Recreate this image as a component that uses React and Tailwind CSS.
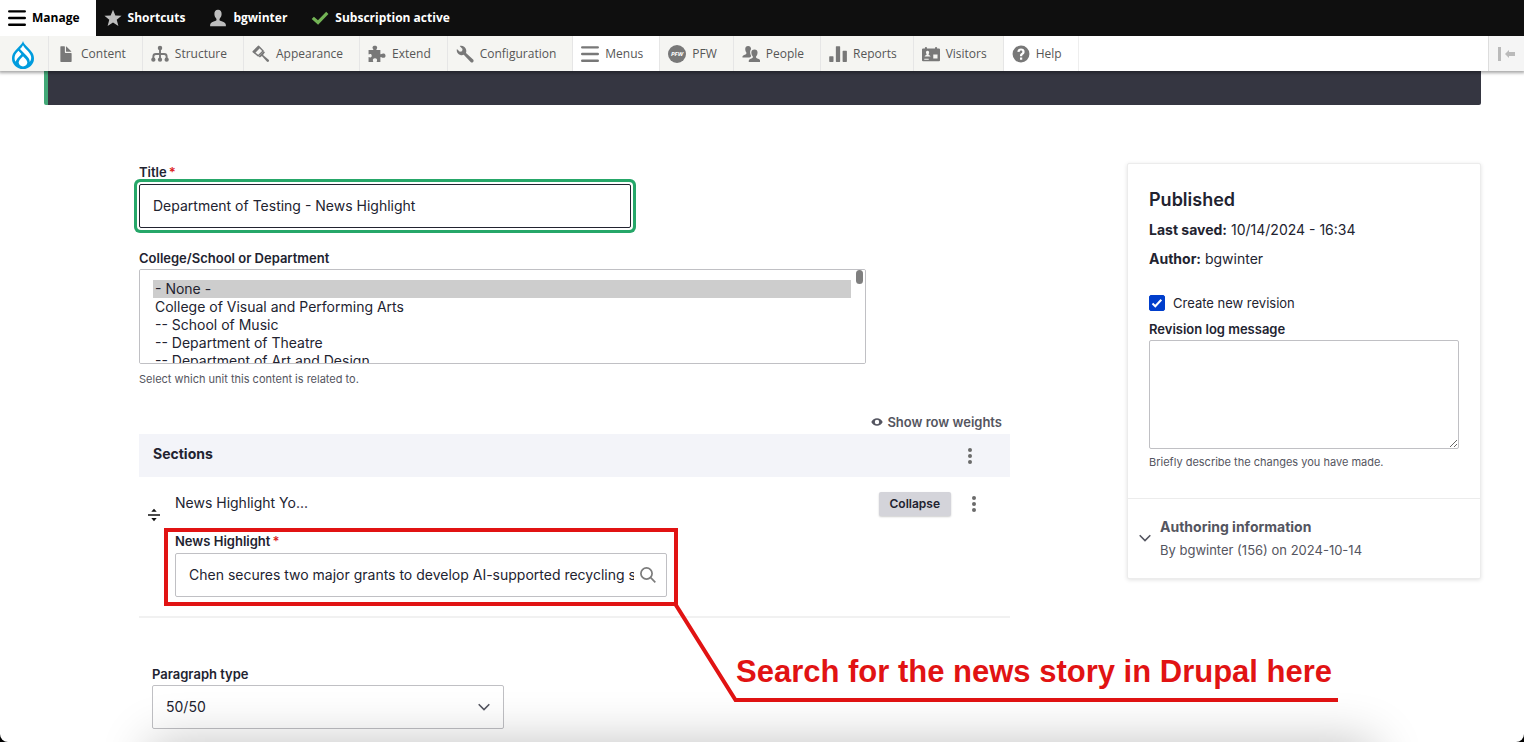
import React from "react";

const ICONS = {
  content: (
    <path d="M12.5 7h-5c-.28 0-.5-.23-.5-.5v-5c0-.28-.23-.5-.5-.5h-3c-.28 0-.5.23-.5.5v13c0 .28.22.5.5.5h9c.28 0 .5-.22.5-.5v-7c0-.28-.22-.5-.5-.5zM8.5 6h4c.28 0 .34-.16.15-.35L8.35 1.35C8.16 1.16 8 1.23 8 1.5v4c0 .28.22.5.5.5z" />
  ),
  structure: (
    <g>
      <circle cx="8" cy="2.6" r="2" />
      <circle cx="2.1" cy="13" r="1.9" />
      <circle cx="8" cy="13" r="1.9" />
      <circle cx="13.9" cy="13" r="1.9" />
      <path d="M8 3v10M2.1 12.500v-2.300q0-2.200 2.200-2.200h7.400q2.200 0 2.200 2.200v2.300" fill="none" stroke="currentColor" strokeWidth="1.7" />
    </g>
  ),
  appearance: (
    <g>
      <path d="M5.800 1.200 1 6l4.600 3.600 4.300-4.300z" fill="none" stroke="currentColor" strokeWidth="1.3" strokeLinejoin="round" />
      <path d="M1 6 5.800 1.200l1.500 1.300-4.700 4.800zM6 10.200l4.500-4.600 1 .9-1.700 2.300 5 4.300q.8.800 0 1.600t-1.600 0L8.800 9.800 7 11z" />
    </g>
  ),
  extend: (
    <path d="M1 4.500h3.300c.6 0 .5-.5.200-.9C3.600 2.300 3.900.6 6.100.6s2.500 1.700 1.600 3c-.3.400-.4.900.2.900H11v3.300c0 .6.500.5.900.2 1.300-.8 3.700-.6 3.700 1.500s-2.400 2.300-3.700 1.400c-.4-.3-.9-.3-.9.300V15H8.100c-.5 0-.5-.4-.2-.8.6-1.200 0-2.500-1.700-2.500s-2.300 1.300-1.700 2.500c.3.400.3.800-.2.800H.5v-3.900c0-.5.400-.5.800-.3 1.100.6 2-.1 2-1.300s-.9-1.800-2-1.200c-.4.200-.8.200-.8-.3V4.500z" />
  ),
  configuration: (
    <path d="M15.200 12.900 8.900 7c.7-1.900.1-3.900-1.400-5.200C6.300.8 4.700.5 3.300.9l2.500 2.600-.4 2-2 .5L.8 3.500C.4 5 .8 6.600 2 7.700c1.300 1.300 3.300 1.700 4.900 1l6.100 6.400c.6.600 1.600.6 2.200 0s.6-1.600 0-2.200z" />
  ),
  menu: (
    <path d="M1.100 1h13.800a1.100 1.100 0 0 1 0 2.200H1.100A1.100 1.100 0 0 1 1.100 1zM1.100 6.900h13.800a1.100 1.100 0 0 1 0 2.200H1.100a1.100 1.100 0 0 1 0-2.200zM1.100 12.800h13.800a1.100 1.100 0 0 1 0 2.200H1.100a1.100 1.100 0 0 1 0-2.200z" />
  ),
  people: (
    <g>
      <path d="M6.700 11.200c.2-.6 1.400-.8 1.500-1.500-.6-.9-1-2-1-3.200 0-1.300.3-2.300.9-3C7.900 1.800 7.100.8 5.500.8 3.500.8 2.800 2 2.900 3.900c.1 1.300.5 2.200 1 2.700.2.900-.2 1.500-.9 1.800C1.400 9 .5 9.400.4 10.500v.7z" />
      <path d="M13.200 11.800c-.8-.3-.9-1.100-.6-1.800.7-.7 1.100-1.700 1.200-3 .1-1.900-.8-3.100-2.700-3.100S8.200 5.100 8.300 7c.1 1.300.5 2.300 1.200 3 .3.700.2 1.500-.6 1.800-1.700.6-2.800 1-2.900 2.300v1h10.100v-1c-.1-1.300-1.200-1.700-2.900-2.300z" />
    </g>
  ),
  reports: (
    <path d="M.7 10h2.800q.5 0 .5.5v4q0 .5-.5.5H.7q-.5 0-.5-.5v-4q0-.5.500-.5zM6.600 1h2.800q.5 0 .5.500v13q0 .5-.5.500H6.600q-.5 0-.5-.5v-13q0-.5.5-.5zM12.600 5h2.800q.5 0 .5.500v9q0 .5-.5.500h-2.800q-.5 0-.5-.5v-9q0-.5.5-.5z" />
  ),
  visitors: (
    <path
      fillRule="evenodd"
      d="M1 3h1.600V2.200c0-.7 1.800-.7 1.800 0V3h7.200v-.8c0-.7 1.800-.7 1.800 0V3H15q1 0 1 1v9.500q0 1-1 1H1q-1 0-1-1V4q0-1 1-1zm3.900 2C3.700 5 3.400 6 3.600 7c.1.600.4.900.6 1.200 0 .8-1.700.6-1.900 2.100h5.300C7.400 8.800 5.700 9 5.700 8.200c.2-.3.500-.6.600-1.200.2-1-.2-2-1.400-2zM10 8.500V12h3.800V8.500zM2 12.300v.8h4v-.8z"
    />
  ),
  help: (
    <path
      fillRule="evenodd"
      d="M8 .5a7.500 7.500 0 1 0 0 15A7.500 7.500 0 0 0 8 .5zM7.100 13v-2h2v2zm3.600-5.300c-.5.700-1.300.9-1.500 1.400-.1.200-.1.500-.1.900h-2c0-1 .1-1.600.6-2.200.5-.5 1.500-.9 1.500-1.800 0-.7-.5-1.100-1.200-1.100-.8 0-1.200.5-1.300 1.400l-2-.2C4.900 4.300 6.100 3.200 8 3.200c2 0 3.200 1.100 3.200 2.700 0 .7-.1 1.300-.5 1.800z"
    />
  ),
  star: <path d="M8 .6l2.100 5.200 5.500.3-4.300 3.500 1.500 5.500L8 12l-4.800 3.100 1.500-5.500L.4 6.100l5.500-.3z" />,
  user: (
    <path d="M10 10.500c-.9-.3-.8-1.400-.4-2.100.9-.9 1.500-2.100 1.600-3.700C11.400 2.300 10.200.6 8 .6S4.600 2.300 4.800 4.700c.1 1.600.7 2.800 1.600 3.700.4.700.5 1.800-.4 2.100C3.400 11.300 1.300 12 1 14v1.400h14V14c-.3-2-2.400-2.700-5-3.500z" />
  ),
  check: <path d="M.6 8.900 2.600 6.900l3.600 3.200L13.500 2.400 15.500 4.400 6.300 14z" />,
};

function Icon({ name, className = "size-[18px]" }) {
  return (
    <svg viewBox="0 0 16 16" fill="currentColor" aria-hidden="true" className={"shrink-0 " + className}>
      {ICONS[name]}
    </svg>
  );
}

function PfwBadge() {
  return (
    <svg viewBox="0 0 18 18" aria-hidden="true" className="size-[18px] shrink-0">
      <circle cx="9" cy="9" r="9" fill="currentColor" />
      <text x="9" y="11.300" textAnchor="middle" fontSize="6" fontWeight="700" fontStyle="italic" fill="#fff">
        PFW
      </text>
    </svg>
  );
}

function DrupalLogo() {
  return (
    <svg viewBox="0 0 22 28" aria-hidden="true" className="h-7 w-[22px]">
      <path
        d="M11 0c-.6 2.300-2.600 4.300-4.600 6.300C3.300 9.400 0 12.700 0 17.400a11 10.600 0 0 0 22 0c0-4.700-3.300-8-6.400-11.100C13.600 4.300 11.600 2.300 11 0z"
        fill="#009cde"
      />
      <path d="M11 4.200C10 5.900 9 7 8 8l6.600 6.700c2.400 2.400 3.300 3.900 3 6.300 1.500-1.700 1.900-3.600 1.400-5.700-.6-2.700-2.600-4.800-4.700-6.900C13 7.100 11.800 5.700 11 4.200z" fill="#fff" />
      <path d="M6.400 9.700C3.800 12.200 2.200 14.700 2.600 18c.1 1.200.5 2.100 1 2.800.5-1.900 2-3.700 5.300-7.100l.5-.6z" fill="#fff" />
      <path d="M11 15.200c-2.900 2.900-4.300 4.500-4.300 6.300 0 2.300 2 3.900 4.300 3.900s4.300-1.600 4.300-3.900c0-1.800-1.400-3.400-4.300-6.300z" fill="#fff" />
    </svg>
  );
}

const TOOLBAR = [
  { label: "Content", icon: "content" },
  { label: "Structure", icon: "structure" },
  { label: "Appearance", icon: "appearance" },
  { label: "Extend", icon: "extend" },
  { label: "Configuration", icon: "configuration" },
  { label: "Menus", icon: "menu", light: true },
  { label: "PFW" },
  { label: "People", icon: "people" },
  { label: "Reports", icon: "reports" },
  { label: "Visitors", icon: "visitors" },
  { label: "Help", icon: "help", light: true },
];

const UNITS = [
  "- None -",
  "College of Visual and Performing Arts",
  "-- School of Music",
  "-- Department of Theatre",
  "-- Department of Art and Design",
  "College of Engineering, Technology, and Computer Science",
  "-- School of Polytechnic",
  "-- Department of Computer Science",
  "College of Liberal Arts",
  "-- School of Education",
  "-- Department of Communication",
  "-- Department of History",
  "College of Science",
  "-- Department of Biology",
  "-- Department of Chemistry",
  "-- Department of Physics",
  "-- Department of Psychology",
];

function Header() {
  return (
    <header className="relative z-10 font-['Open_Sans',sans-serif] text-xs shadow-[0_1px_3px_1px_rgba(0,0,0,0.35)]">
      <nav aria-label="Administration" className="flex h-9 items-stretch bg-[#0f0f0f] font-bold text-white">
        <a href="#manage" className="flex items-center gap-1.5 bg-white pr-4 pl-2 text-black">
          <Icon name="menu" />
          Manage
        </a>
        <a href="#shortcuts" className="flex items-center gap-1.5 pl-2">
          <Icon name="star" className="size-[18px] text-[#bebebe]" />
          Shortcuts
        </a>
        <a href="#user" className="flex items-center gap-1.5 pl-6">
          <Icon name="user" className="size-[18px] text-[#bebebe]" />
          bgwinter
        </a>
        <a href="#subscription" className="flex items-center gap-1.5 pl-6">
          <Icon name="check" className="size-[18px] text-[#73b355]" />
          Subscription active
        </a>
      </nav>
      <nav aria-label="Site" className="flex h-[35px] items-stretch bg-white text-[#565656]">
        <a href="#home" aria-label="Home" className="flex w-12 items-center bg-[#f5f5f2] pt-0.5 pl-3">
          <DrupalLogo />
        </a>
        {TOOLBAR.map((item) => (
          <a
            key={item.label}
            href={"#" + item.label.toLowerCase()}
            className={
              "flex items-center gap-1.5 border-l border-[#e6e6e6] pr-4 pl-2 " +
              (item.light ? "bg-white" : "bg-[#f5f5f2]")
            }
          >
            <span className="flex text-[#787878]">{item.icon ? <Icon name={item.icon} /> : <PfwBadge />}</span>
            {item.label}
          </a>
        ))}
        <div className="flex-1 border-l border-[#eeeeee]" />
        <button
          type="button"
          aria-label="Vertical orientation"
          className="flex w-9 items-center justify-center border-l border-[#dddddd] bg-[#f5f5f5] text-[#bababa]"
        >
          <svg viewBox="0 0 18 14" fill="currentColor" className="h-3.5 w-[18px]">
            <path d="M0 0h3v14H0zM7 7l4-4v2h6v4h-6v2z" />
          </svg>
        </button>
      </nav>
    </header>
  );
}

function Required() {
  return <span className="ml-0.5 text-[#dc2323]">*</span>;
}

function Kebab() {
  return (
    <svg viewBox="0 0 4 16" fill="#6b6b6b" aria-hidden="true" className="h-4 w-1">
      <circle cx="2" cy="2" r="2" />
      <circle cx="2" cy="8" r="2" />
      <circle cx="2" cy="14" r="2" />
    </svg>
  );
}

function Chevron({ className }) {
  return (
    <svg viewBox="0 0 12 8" fill="none" stroke="#545560" strokeWidth="1.6" aria-hidden="true" className={className}>
      <path d="M.7 1.200 6 6.500l5.300-5.300" />
    </svg>
  );
}

function Sections() {
  return (
    <section className="mt-6">
      <div className="flex justify-end pr-2">
        <button type="button" className="flex items-center gap-1 text-[13px] leading-5 font-semibold text-[#545560]">
          <svg viewBox="0 0 12 8" aria-hidden="true" className="h-2 w-3">
            <path fill="#545560" fillRule="evenodd" d="M6 .3C3.500.3 1.300 1.800.3 4c1 2.200 3.200 3.700 5.700 3.700S10.700 6.200 11.700 4C10.700 1.800 8.500.3 6 .3zM6 6.200a2.200 2.200 0 1 1 0-4.400 2.200 2.200 0 0 1 0 4.400z" />
          </svg>
          Show row weights
        </button>
      </div>
      <div className="mt-0.5 flex h-[43px] items-center justify-between bg-[#f3f4f9] pr-[38px] pl-3.5">
        <h2 className="pb-1 text-sm font-bold">Sections</h2>
        <button type="button" aria-label="Section actions" className="flex">
          <Kebab />
        </button>
      </div>
      <div className="flex border-b-2 border-[#f1f1f1] pb-[19px]">
        <button type="button" aria-label="Drag to re-order" className="mt-[31px] ml-[9px] flex h-3.5 w-3 shrink-0">
          <svg viewBox="0 0 12 14" fill="#111" className="h-3.5 w-3">
            <path d="M0 6.200h12v1.500H0zM6 .7l2.700 3.100H3.300zM6 13.200l2.700-3.100H3.300z" />
          </svg>
        </button>
        <div className="ml-[15px] min-w-0 flex-1">
          <div className="mt-[15px] flex h-6 items-center">
            <span className="flex-1 pb-0.5 text-sm">News Highlight Yo...</span>
            <button
              type="button"
              className="mr-[21px] h-6 rounded-xs bg-[#d4d4da] px-[11px] text-xs font-semibold shadow-[0_1px_2px_rgba(0,0,0,0.2)]"
            >
              Collapse
            </button>
            <button type="button" aria-label="Item actions" className="mr-[34px] flex">
              <Kebab />
            </button>
          </div>
          <div className="relative mt-[15px] w-[492px]">
            <label htmlFor="highlight" className="block text-[13px] leading-5 font-semibold">
              News Highlight
              <Required />
            </label>
            <div className="mt-0.5 flex h-11 items-center rounded-xs border border-[#c0c0c4] bg-white pr-2.5 pl-[13px]">
              <input
                id="highlight"
                type="text"
                defaultValue="Chen secures two major grants to develop AI-supported recycling system"
                className="min-w-0 flex-1 bg-transparent text-sm outline-none"
              />
              <svg viewBox="0 0 16 16" fill="none" stroke="#7c7c7c" strokeWidth="1.700" aria-hidden="true" className="ml-1.5 size-4">
                <circle cx="6.500" cy="6.500" r="5.600" />
                <path d="m10.700 10.700 4.600 4.600" />
              </svg>
            </div>
            <Callout />
          </div>
        </div>
      </div>
    </section>
  );
}

function Callout() {
  return (
    <div className="pointer-events-none absolute -top-[3px] -right-[11px] -bottom-[9px] -left-[11px] border-4 border-[#e11313]">
      <svg viewBox="0 0 664 100" fill="none" className="absolute top-full left-full h-[100px] w-[664px]">
        <path d="M0 0 61.500 98H664" stroke="#e11313" strokeWidth="4" />
      </svg>
      <p className="absolute top-full left-full mt-[50px] ml-[62px] font-['Liberation_Sans',sans-serif] text-[31px] leading-10 font-bold whitespace-nowrap text-[#e11313]">
        Search for the news story in Drupal here
      </p>
    </div>
  );
}

function Sidebar() {
  return (
    <aside className="w-[354px] shrink-0 self-start rounded-xs border border-[#ececec] bg-white shadow-[0_1px_4px_rgba(0,0,0,0.12)]">
      <div className="px-[21px] pt-6 pb-[27px]">
        <h2 className="text-lg leading-6 font-semibold">Published</h2>
        <p className="mt-1.5 text-sm leading-6">
          <b>Last saved:</b> 10/14/2024 - 16:34
        </p>
        <p className="mt-[5px] text-sm leading-6">
          <b>Author:</b> bgwinter
        </p>
        <label className="mt-[22px] flex items-center gap-2 text-[13px] leading-5">
          <span className="relative flex size-4">
            <input
              type="checkbox"
              defaultChecked
              className="size-4 appearance-none rounded-xs border border-[#8e929c] checked:border-[#003ecc] checked:bg-[#003ecc]"
            />
            <svg viewBox="0 0 16 16" fill="none" stroke="#fff" strokeWidth="2" aria-hidden="true" className="pointer-events-none absolute inset-0">
              <path d="m3.500 8.500 2.800 2.700 6-6.500" />
            </svg>
          </span>
          Create new revision
        </label>
        <label htmlFor="log" className="mt-1.5 block text-[13px] leading-5 font-semibold">
          Revision log message
        </label>
        <textarea id="log" className="mt-px block h-[109px] w-full rounded-xs border border-[#c0c0c4] bg-white outline-none" />
        <p className="mt-1 text-[11px] leading-[18px] text-[#545560]">Briefly describe the changes you have made.</p>
      </div>
      <button type="button" className="flex w-full items-center gap-[9px] border-t border-[#ececec] px-[11px] pt-4 pb-[17px] text-left text-[#545560]">
        <Chevron className="h-2 w-3" />
        <span>
          <span className="block text-sm leading-6 font-bold">Authoring information</span>
          <span className="block text-[13px] leading-[22px]">By bgwinter (156) on 2024-10-14</span>
        </span>
      </button>
    </aside>
  );
}

export default function App() {
  return (
    <div className="h-screen bg-black">
      <div className="relative h-full overflow-hidden rounded-b-lg bg-white font-['Inter',sans-serif] text-[#222330]">
        <Header />
        <div className="pr-[43px] pl-11">
          <div role="status" className="h-[34px] rounded-b-xs border-l-4 border-[#42a877] bg-[#353641]" />
          <div className="flex pt-[58px]">
            <form className="min-w-0 flex-1 pr-[117px] pl-[95px]">
              <label htmlFor="title" className="block text-[13px] leading-[18px] font-semibold">
                Title
                <Required />
              </label>
              <input
                id="title"
                type="text"
                defaultValue="Department of Testing - News Highlight"
                className="mt-[3px] block h-11 w-[492px] rounded-xs border border-[#222330] bg-white px-[13px] pb-0.5 text-sm ring-[3px] ring-[#26a769] ring-offset-2 outline-none"
              />
              <label htmlFor="unit" className="mt-5 block text-[13px] leading-5 font-semibold">
                College/School or Department
              </label>
              <div className="relative mt-px w-[727px] max-w-full">
                <select
                  id="unit"
                  size={5}
                  defaultValue="- None -"
                  className="block h-[95px] w-full rounded-xs border border-[#c0c0c4] bg-white pt-2.5 pr-[14px] pl-[13px] text-sm outline-none"
                >
                  {UNITS.map((unit) => (
                    <option key={unit} className="min-h-[18px] px-0.5 py-0 leading-[18px] checked:bg-[#cdcdcd] checked:text-[#222330]">
                      {unit}
                    </option>
                  ))}
                </select>
                <span className="pointer-events-none absolute top-px right-[3px] h-3.5 w-[7px] rounded-full bg-[#7f7f7f]" />
              </div>
              <p className="mt-1.5 text-[11px] leading-[18px] text-[#545560]">Select which unit this content is related to.</p>
              <Sections />
              <div className="mt-[46px] pl-[13px]">
                <label htmlFor="paragraph" className="block text-[13px] leading-5 font-semibold">
                  Paragraph type
                </label>
                <div className="relative mt-px w-[352px]">
                  <select
                    id="paragraph"
                    className="h-11 w-full appearance-none rounded-xs border border-[#c0c0c4] bg-white pr-10 pb-px pl-[13px] text-sm outline-none"
                  >
                    <option>50/50</option>
                  </select>
                  <Chevron className="pointer-events-none absolute top-[18px] right-3.5 h-2 w-3" />
                </div>
              </div>
            </form>
            <Sidebar />
          </div>
        </div>
        <div className="pointer-events-none absolute top-full right-[150px] left-[150px] h-24 shadow-[0_0_50px_rgba(0,0,0,0.24)]" />
      </div>
    </div>
  );
}
